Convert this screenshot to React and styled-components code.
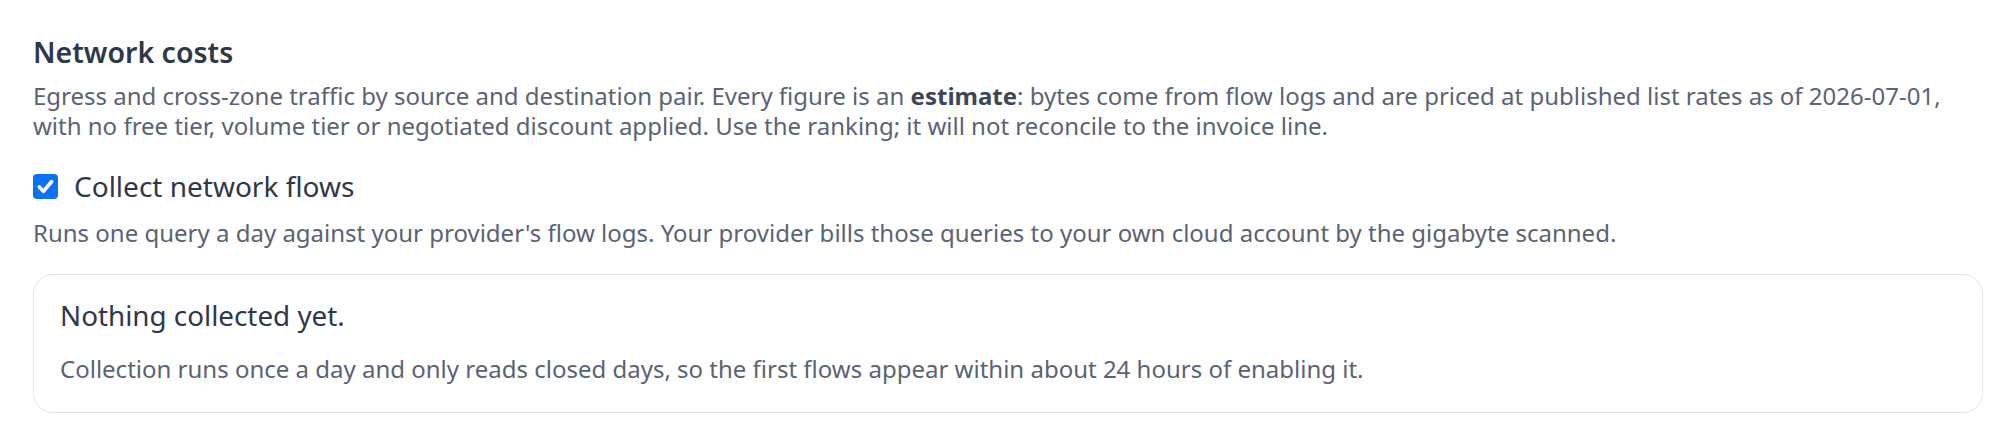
import styled, { createGlobalStyle } from "styled-components";

const GlobalStyle = createGlobalStyle`
	body {
		margin: 0;
		background: #ffffff;
		font-family: "Noto Sans", "Open Sans", sans-serif;
	}
`;

const Section = styled.section`
	padding: 35px 33px 30px;
`;

const Title = styled.h2`
	margin: 0;
	font-size: 28.5px;
	line-height: 34px;
	font-weight: 600;
	color: #2e3848;
`;

const Text = styled.p`
	margin: ${(p) => p.$mt || 0}px 0 0;
	font-size: 24px;
	line-height: 30px;
	color: #5a6375;

	strong {
		font-weight: 700;
		color: #3d4656;
	}
`;

const Toggle = styled.label`
	display: flex;
	align-items: center;
	gap: 16px;
	margin-top: 28px;
	font-size: 28px;
	line-height: 34px;
	color: #2e3848;
	cursor: pointer;
`;

const Box = styled.span`
	display: flex;
	align-items: center;
	justify-content: center;
	width: 25px;
	height: 25px;
	border-radius: 4px;
	background: ${(p) => (p.$checked ? "#0a72f5" : "#fff")};
	border: ${(p) => (p.$checked ? "none" : "2px solid #767676")};
	box-sizing: border-box;
	flex-shrink: 0;
`;

const Card = styled.div`
	margin-top: 26px;
	padding: 24px 26px 28px;
	border: 1.5px solid #e4e5ea;
	border-radius: 20px;
`;

const CardTitle = styled.h3`
	margin: 0;
	font-size: 27.8px;
	line-height: 32px;
	font-weight: 400;
	color: #2e3848;
`;

function Checkbox({ checked }) {
	return (
		<Box $checked={checked}>
			{checked && (
				<svg width="19" height="19" viewBox="0 0 16 16">
					<path
						d="M2.8 8.4 6.3 12 13.2 3.8"
						fill="none"
						stroke="#fff"
						strokeWidth="3"
						strokeLinecap="round"
						strokeLinejoin="round"
					/>
				</svg>
			)}
		</Box>
	);
}

export default function App() {
	return (
		<>
			<GlobalStyle />
			<Section>
				<Title>Network costs</Title>
				<Text $mt={12}>
					Egress and cross-zone traffic by source and destination pair. Every figure is an{" "}
					<strong>estimate</strong>: bytes come from flow logs and are priced at published list rates
					as of 2026-07-01, with no free tier, volume tier or negotiated discount applied. Use the
					ranking; it will not reconcile to the invoice line.
				</Text>
				<Toggle>
					<Checkbox checked />
					Collect network flows
				</Toggle>
				<Text $mt={15}>
					Runs one query a day against your provider's flow logs. Your provider bills those queries to
					your own cloud account by the gigabyte scanned.
				</Text>
				<Card>
					<CardTitle>Nothing collected yet.</CardTitle>
					<Text $mt={23}>
						Collection runs once a day and only reads closed days, so the first flows appear within
						about 24 hours of enabling it.
					</Text>
				</Card>
			</Section>
		</>
	);
}
